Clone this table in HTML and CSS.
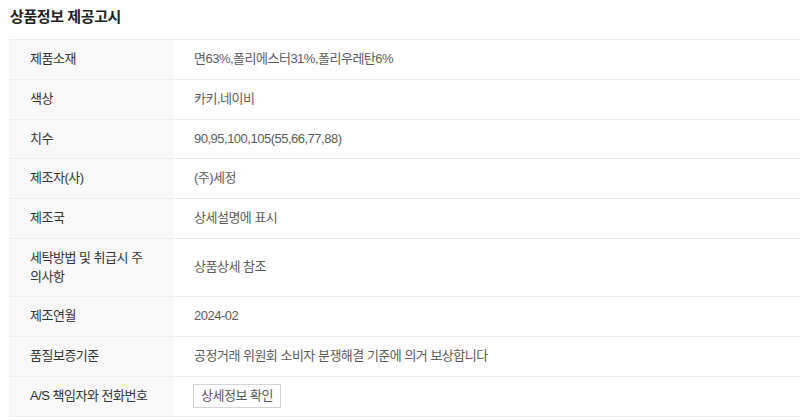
FILE: index.html
```html
<!DOCTYPE html>
<html lang="ko">
<head>
    <meta charset="UTF-8">
    <meta name="viewport" content="width=device-width, initial-scale=1.0">
    <title>상품정보 제공고시</title>
    <link rel="stylesheet" href="styles.css">
</head>
<body>

    <div class="notice">
        <h2 class="notice-title">상품정보 제공고시</h2>

        <table class="notice-table">
            <tr>
                <th>제품소재</th>
                <td>면63%,폴리에스터31%,폴리우레탄6%</td>
            </tr>
            <tr>
                <th>색상</th>
                <td>카키,네이비</td>
            </tr>
            <tr>
                <th>치수</th>
                <td>90,95,100,105(55,66,77,88)</td>
            </tr>
            <tr>
                <th>제조자(사)</th>
                <td>(주)세정</td>
            </tr>
            <tr>
                <th>제조국</th>
                <td>상세설명에 표시</td>
            </tr>
            <tr>
                <th>세탁방법 및 취급시 주의사항</th>
                <td>상품상세 참조</td>
            </tr>
            <tr>
                <th>제조연월</th>
                <td>2024-02</td>
            </tr>
            <tr>
                <th>품질보증기준</th>
                <td>공정거래 위원회 소비자 분쟁해결 기준에 의거 보상합니다</td>
            </tr>
            <tr>
                <th>A/S 책임자와 전화번호</th>
                <td class="btn-cell"><button class="info-btn">상세정보 확인</button></td>
            </tr>
        </table>
    </div>

</body>
</html>
```

FILE: styles.css
```css
body {
    margin: 0;
    background-color: #fff;
    font-family: 'Liberation Sans', 'Noto Sans CJK KR', sans-serif;
    color: #333;
}
.notice {
    padding: 7px 0 0 9px;
}
.notice-title {
    margin: 0 0 12px 1px;
    font-size: 15px;
    line-height: 20px;
    font-weight: bold;
    letter-spacing: -0.4px;
    color: #222;
}
.notice-table {
    width: 100%;
    border-collapse: collapse;
    border-top: 1px solid #eee;
    font-size: 13px;
    letter-spacing: -0.5px;
    line-height: 18.75px;
}
.notice-table th,
.notice-table td {
    padding: 10px 20px;
    border-bottom: 1px solid #eee;
    text-align: left;
    vertical-align: middle;
}
.notice-table th {
    width: 118px;
    padding: 10px 25px 10px 21px;
    background-color: #f8f8f8;
    font-weight: normal;
    color: #333;
}
.notice-table td {
    color: #5c5c5c;
    padding-left: 21px;
}
.notice-table td.btn-cell {
    padding: 7px 20px 7.75px 20px;
}
.info-btn {
    font-family: inherit;
    font-size: 13px;
    letter-spacing: -0.5px;
    line-height: 22px;
    padding: 0 7px;
    border: 1px solid #d4d4d4;
    background-color: #fff;
    color: #555;
    cursor: pointer;
}
```
